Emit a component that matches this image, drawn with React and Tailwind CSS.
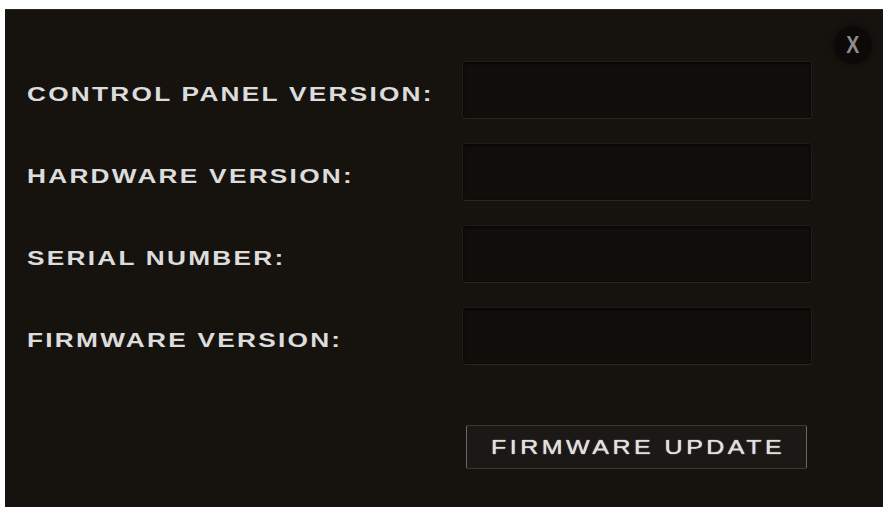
import React from "react";

const rows = [
  "CONTROL PANEL VERSION:",
  "HARDWARE VERSION:",
  "SERIAL NUMBER:",
  "FIRMWARE VERSION:",
];

export default function App() {
  return (
    <div className="w-[889px] h-[507px] bg-white pt-[9px] pl-[5px] pr-[6px] overflow-hidden" style={{ fontFamily: '"Liberation Sans", Arial, sans-serif' }}>
      <div className="relative h-full bg-[#16130f] border-t border-[#2a2623] flex flex-col">
        <div className="absolute right-[12px] top-[17px] w-[36px] h-[36px] rounded-full bg-[#0c0a08] flex items-center justify-center text-[#8c8c8c] text-[23px] font-bold shadow-[0_0_6px_rgba(0,0,0,0.8)]">
          <span className="inline-block scale-x-[0.85] leading-none">X</span>
        </div>
        <div className="flex flex-col gap-[24px] pt-[51px]">
          {rows.map((label) => (
            <div key={label} className="flex items-center h-[58px]">
              <div className="w-[457px] pl-[22px] pt-[11px] whitespace-nowrap">
                <span className="inline-block origin-left scale-x-[1.25] text-[21px] font-bold tracking-[1.8px] text-[#dcdcdc] leading-none">
                  {label}
                </span>
              </div>
              <div className="w-[350px] h-[58px] bg-[#100d0a] rounded-[3px] border border-[#1f1c19] border-b-[#2a2622] shadow-[inset_0_1px_3px_rgba(0,0,0,0.8)]" />
            </div>
          ))}
        </div>
        <div className="flex pl-[461px] pt-[60px]">
          <div className="w-[341px] h-[44px] bg-[#1b1815] border border-[#3a3633] border-x-[#6a6662] rounded-[2px] flex items-center justify-center">
            <span className="inline-block scale-x-[1.25] text-[20px] tracking-[2.8px] text-[#e0e0e0] leading-none pl-[3px] [text-shadow:0_0_1px_#ffffff]">
              FIRMWARE UPDATE
            </span>
          </div>
        </div>
      </div>
    </div>
  );
}
